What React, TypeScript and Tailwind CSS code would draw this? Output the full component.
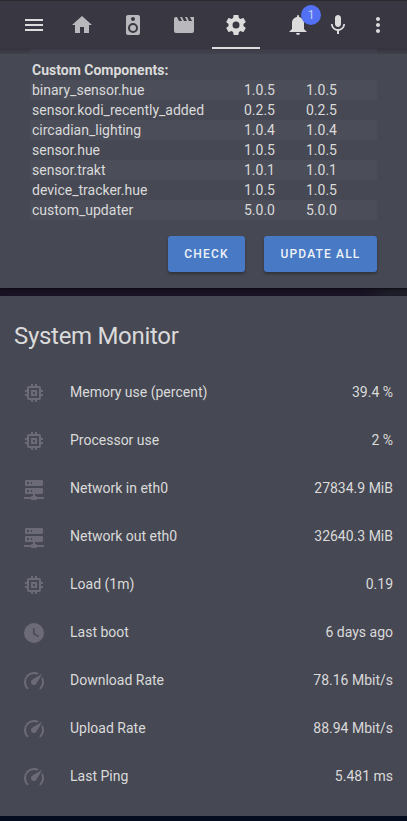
import React from "react";

const icons = {
  menu: "M3,6H21V8H3V6M3,11H21V13H3V11M3,16H21V18H3V16Z",
  home: "M10,20V14H14V20H19V12H22L12,3L2,12H5V20H10Z",
  speaker:
    "M12,12A3,3 0 0,0 9,15A3,3 0 0,0 12,18A3,3 0 0,0 15,15A3,3 0 0,0 12,12M12,20A5,5 0 0,1 7,15A5,5 0 0,1 12,10A5,5 0 0,1 17,15A5,5 0 0,1 12,20M12,4A2,2 0 0,1 14,6A2,2 0 0,1 12,8C10.89,8 10,7.1 10,6C10,4.89 10.89,4 12,4M17,2H7C5.89,2 5,2.89 5,4V20A2,2 0 0,0 7,22H17A2,2 0 0,0 19,20V4C19,2.89 18.1,2 17,2Z",
  movie:
    "M18,4L20,8H17L15,4H13L15,8H12L10,4H8L10,8H7L5,4H4A2,2 0 0,0 2,6V18A2,2 0 0,0 4,20H20A2,2 0 0,0 22,18V4H18Z",
  settings:
    "M12,15.5A3.5,3.5 0 0,1 8.5,12A3.5,3.5 0 0,1 12,8.5A3.5,3.5 0 0,1 15.5,12A3.5,3.5 0 0,1 12,15.5M19.43,12.97C19.47,12.65 19.5,12.33 19.5,12C19.5,11.67 19.47,11.34 19.43,11L21.54,9.37C21.73,9.22 21.78,8.95 21.66,8.73L19.66,5.27C19.54,5.05 19.27,4.96 19.05,5.05L16.56,6.05C16.04,5.66 15.5,5.32 14.87,5.07L14.5,2.42C14.46,2.18 14.25,2 14,2H10C9.75,2 9.54,2.18 9.5,2.42L9.13,5.07C8.5,5.32 7.96,5.66 7.44,6.05L4.95,5.05C4.73,4.96 4.46,5.05 4.34,5.27L2.34,8.73C2.21,8.95 2.27,9.22 2.46,9.37L4.57,11C4.53,11.34 4.5,11.67 4.5,12C4.5,12.33 4.53,12.65 4.57,12.97L2.46,14.63C2.27,14.78 2.21,15.05 2.34,15.27L4.34,18.73C4.46,18.95 4.73,19.03 4.95,18.95L7.44,17.94C7.96,18.34 8.5,18.68 9.13,18.93L9.5,21.58C9.54,21.82 9.75,22 10,22H14C14.25,22 14.46,21.82 14.5,21.58L14.87,18.93C15.5,18.67 16.04,18.34 16.56,17.94L19.05,18.95C19.27,19.03 19.54,18.95 19.66,18.73L21.66,15.27C21.78,15.05 21.73,14.78 21.54,14.63L19.43,12.97Z",
  bell: "M14,20A2,2 0 0,1 12,22A2,2 0 0,1 10,20H14M12,2A1,1 0 0,1 13,3V4.08C15.84,4.56 18,7.03 18,10V16L21,19H3L6,16V10C6,7.03 8.16,4.56 11,4.08V3A1,1 0 0,1 12,2Z",
  mic: "M12 14c1.66 0 2.99-1.34 2.99-3L15 5c0-1.66-1.34-3-3-3S9 3.34 9 5v6c0 1.66 1.34 3 3 3zm5.3-3c0 3-2.54 5.1-5.3 5.1S6.7 14 6.7 11H5c0 3.41 2.72 6.23 6 6.72V21h2v-3.28c3.28-.48 6-3.3 6-6.72h-1.7z",
  dots: "M12 8c1.1 0 2-.9 2-2s-.9-2-2-2-2 .9-2 2 .9 2 2 2zm0 2c-1.1 0-2 .9-2 2s.9 2 2 2 2-.9 2-2-.9-2-2-2zm0 6c-1.1 0-2 .9-2 2s.9 2 2 2 2-.9 2-2-.9-2-2-2z",
  memory:
    "M17,17H7V7H17M21,11V9H19V7C19,5.89 18.1,5 17,5H15V3H13V5H11V3H9V5H7C5.89,5 5,5.89 5,7V9H3V11H5V13H3V15H5V17A2,2 0 0,0 7,19H9V21H11V19H13V21H15V19H17A2,2 0 0,0 19,17V15H21V13H19V11M13,13H11V11H13M15,9H9V15H15V9Z",
  server:
    "M13,19H14A1,1 0 0,1 15,20H22V22H15A1,1 0 0,1 14,23H10A1,1 0 0,1 9,22H2V20H9A1,1 0 0,1 10,19H11V17H4A1,1 0 0,1 3,16V12A1,1 0 0,1 4,11H20A1,1 0 0,1 21,12V16A1,1 0 0,1 20,17H13V19M4,3H20A1,1 0 0,1 21,4V8A1,1 0 0,1 20,9H4A1,1 0 0,1 3,8V4A1,1 0 0,1 4,3M9,7H10V5H9V7M9,15H10V13H9V15M5,5V7H7V5H5M5,13V15H7V13H5Z",
  clock:
    "M12,2A10,10 0 0,0 2,12A10,10 0 0,0 12,22A10,10 0 0,0 22,12A10,10 0 0,0 12,2M16.2,16.2L11,13V7H12.5V12.2L17,14.9L16.2,16.2Z",
  gauge:
    "M12,16A3,3 0 0,1 9,13C9,11.88 9.61,10.9 10.5,10.39L20.21,4.77L14.68,14.35C14.18,15.33 13.17,16 12,16M12,3C13.81,3 15.5,3.5 16.97,4.32L14.87,5.53C14,5.19 13,5 12,5A8,8 0 0,0 4,13C4,15.21 4.89,17.21 6.34,18.65H6.35C6.74,19.04 6.74,19.67 6.35,20.06C5.96,20.45 5.32,20.45 4.93,20.07V20.07C3.12,18.26 2,15.76 2,13A10,10 0 0,1 12,3M22,13C22,15.76 20.88,18.26 19.07,20.07V20.07C18.68,20.45 18.05,20.45 17.66,20.06C17.27,19.67 17.27,19.04 17.66,18.65V18.65C19.11,17.2 20,15.21 20,13C20,12 19.81,11 19.46,10.1L20.67,8C21.5,9.5 22,11.18 22,13Z",
};

type IconName = keyof typeof icons;

function Icon({ name, className = "" }: { name: IconName; className?: string }) {
  return (
    <svg viewBox="0 0 24 24" className={`size-6 shrink-0 fill-current ${className}`}>
      <path d={icons[name]} fillRule={name === "memory" ? "evenodd" : undefined} />
    </svg>
  );
}

const tabs: { icon: IconName; active?: boolean }[] = [
  { icon: "home" },
  { icon: "speaker" },
  { icon: "movie" },
  { icon: "settings", active: true },
];

const components = [
  ["binary_sensor.hue", "1.0.5", "1.0.5"],
  ["sensor.kodi_recently_added", "0.2.5", "0.2.5"],
  ["circadian_lighting", "1.0.4", "1.0.4"],
  ["sensor.hue", "1.0.5", "1.0.5"],
  ["sensor.trakt", "1.0.1", "1.0.1"],
  ["device_tracker.hue", "1.0.5", "1.0.5"],
  ["custom_updater", "5.0.0", "5.0.0"],
];

const sensors: { icon: IconName; name: string; value: string }[] = [
  { icon: "memory", name: "Memory use (percent)", value: "39.4 %" },
  { icon: "memory", name: "Processor use", value: "2 %" },
  { icon: "server", name: "Network in eth0", value: "27834.9 MiB" },
  { icon: "server", name: "Network out eth0", value: "32640.3 MiB" },
  { icon: "memory", name: "Load (1m)", value: "0.19" },
  { icon: "clock", name: "Last boot", value: "6 days ago" },
  { icon: "gauge", name: "Download Rate", value: "78.16 Mbit/s" },
  { icon: "gauge", name: "Upload Rate", value: "88.94 Mbit/s" },
  { icon: "gauge", name: "Last Ping", value: "5.481 ms" },
];

function Header() {
  return (
    <header className="flex h-[49px] items-stretch border-t border-[#29292b] bg-[#393842] pr-[9px] text-[#dcdcdd]">
      <button className="flex w-14 items-center pl-[22px]">
        <Icon name="menu" />
      </button>
      <nav className="flex">
        {tabs.map((tab) => (
          <button
            key={tab.icon}
            className={`flex w-[51.33px] shrink-0 justify-center ${tab.active ? "" : "text-[#b9b9bd]"}`}
          >
            <span
              className={`flex h-full w-12 items-center justify-center border-b-2 pt-0.5 ${
                tab.active ? "border-[#dcdcdd]" : "border-transparent"
              }`}
            >
              <Icon name={tab.icon} />
            </span>
          </button>
        ))}
      </nav>
      <div className="ml-auto flex">
        <button className="relative flex w-10 items-center justify-center">
          <Icon name="bell" />
          <span className="absolute top-1 left-[23px] flex size-5 items-center justify-center rounded-full bg-[#5271f4] pb-px text-[12px] text-[#c3cff2]">
            1
          </span>
        </button>
        <button className="flex w-10 items-center justify-center">
          <Icon name="mic" />
        </button>
        <button className="flex w-10 items-center justify-center">
          <Icon name="dots" />
        </button>
      </div>
    </header>
  );
}

function ActionButton({ label, className }: { label: string; className: string }) {
  return (
    <button
      className={`h-9 rounded-[3px] bg-[#4779c4] text-[12px] font-medium tracking-[1.15px] text-[#eef2f8] shadow-[0_2px_3px_rgba(0,0,0,0.3)] ${className}`}
    >
      {label}
    </button>
  );
}

function UpdaterCard() {
  return (
    <section className="h-[239px] bg-[#464853] shadow-[0_1px_2px_rgba(0,0,0,0.6)]">
      <div className="flex h-[5px]">
        <div className="w-[30px] bg-linear-to-b from-[#33343d] to-[#40414c]" />
        <div className="flex-1 bg-linear-to-b from-[#3b3b46] to-[#42434e]" />
        <div className="w-[30px] bg-linear-to-b from-[#33343d] to-[#40414c]" />
      </div>
      <div className="ml-[30px] w-[347px] pt-1.5 text-[14px] leading-5">
        <h2 className="pl-0.5 font-bold">Custom Components:</h2>
        {components.map(([name, installed, available]) => (
          <div key={name} className="flex pl-0.5 odd:bg-transparent even:bg-[#4b4d59]">
            <span className="w-[212px]">{name}</span>
            <span className="w-[62px]">{installed}</span>
            <span>{available}</span>
          </div>
        ))}
      </div>
      <div className="mt-4 flex justify-end gap-[19px] pr-[30px]">
        <ActionButton label="CHECK" className="w-[77px]" />
        <ActionButton label="UPDATE ALL" className="w-[113px]" />
      </div>
    </section>
  );
}

function MonitorCard() {
  return (
    <section className="mt-2 h-[520px] bg-[#464853]">
      <h1 className="h-[72px] pt-5 pl-[14px] text-[24px] leading-10 tracking-[-0.3px]">System Monitor</h1>
      {sensors.map((sensor) => (
        <div key={sensor.name} className="flex h-12 items-center pr-[14px] pl-[22px] text-[14px]">
          <Icon name={sensor.icon} className="mt-0.5 text-[#6d6a78]" />
          <span className="ml-6">{sensor.name}</span>
          <span className="ml-auto">{sensor.value}</span>
        </div>
      ))}
    </section>
  );
}

export default function App() {
  return (
    <div className="h-[821px] overflow-hidden bg-[linear-gradient(100deg,#181223_0%,#181223_75%,#1d1d28_80%)] font-[Roboto,sans-serif] text-[#dadada]">
      <Header />
      <UpdaterCard />
      <MonitorCard />
      <div className="h-[5px] bg-[#040d20]" />
    </div>
  );
}
